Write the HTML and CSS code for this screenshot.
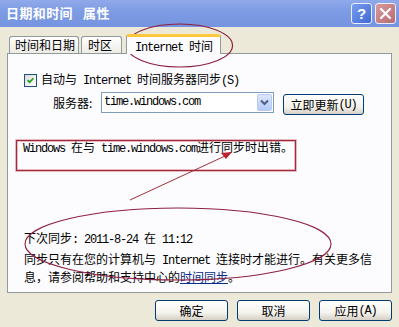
FILE: index.html
```html
<!DOCTYPE html>
<html lang="zh-CN">
<head>
<meta charset="utf-8">
<title>日期和时间 属性</title>
<link rel="stylesheet" href="styles.css">
</head>
<body>
<div class="window">
  <div class="titlebar">
    <div class="title"><span>日期和时间</span><span class="title-2">属性</span></div>
    <div class="tb-buttons">
      <div class="tb-btn help">?</div>
      <div class="tb-btn close">
        <svg width="13" height="13" viewBox="0 0 13 13"><path d="M2 2 L11 11 M11 2 L2 11" stroke="#fff" stroke-width="2.2" stroke-linecap="round"/></svg>
      </div>
    </div>
  </div>

  <div class="tabs">
    <div class="tab tab-1">时间和日期</div>
    <div class="tab tab-2">时区</div>
    <div class="tab tab-active"><span class="en">Internet </span>时间</div>
  </div>

  <div class="panel">
    <div class="row check-row">
      <span class="checkbox">
        <svg width="13" height="13" viewBox="0 0 13 13"><path d="M3 6 L5.5 8.5 L10 3.8" fill="none" stroke="#21a121" stroke-width="2"/></svg>
      </span>
      <span class="label">自动与<span class="en"> Internet </span>时间服务器同步<span class="en">(S)</span></span>
    </div>
    <div class="row server-row">
      <span class="server-label">服务器:</span>
      <div class="combo">
        <span class="en combo-text">time.windows.com</span>
        <span class="combo-btn">
          <svg width="9" height="7" viewBox="0 0 9 7"><path d="M1 1.5 L4.5 5 L8 1.5" fill="none" stroke="#4d6185" stroke-width="2"/></svg>
        </span>
      </div>
      <div class="btn btn-update">立即更新<span class="en">(U)</span></div>
    </div>
    <div class="message"><span class="en">Windows </span>在与<span class="en"> time.windows.com</span>进行同步时出错。</div>
    <div class="next-sync">下次同步<span class="en">: 2011-8-24 </span>在<span class="en"> 11:12</span></div>
    <div class="desc">同步只有在您的计算机与<span class="en"> Internet </span>连接时才能进行。有关更多信<br>息，请参阅帮助和支持中心的<span class="link">时间同步</span>。</div>
  </div>

  <div class="footer">
    <div class="btn btn-foot">确定</div>
    <div class="btn btn-foot">取消</div>
    <div class="btn btn-foot">应用<span class="en">(A)</span></div>
  </div>
</div>

<svg class="annotations" width="399" height="327" viewBox="0 0 399 327">
  <ellipse cx="179.5" cy="45.5" rx="53" ry="21.5" fill="none" stroke="#8e2040" stroke-width="1.2"/>
  <rect x="16.5" y="140.5" width="279" height="30" fill="none" stroke="#e8a8b0" stroke-width="3" opacity="0.5"/>
  <rect x="16.5" y="140.5" width="279" height="30" fill="none" stroke="#9e2a3a" stroke-width="1.3"/>
  <line x1="130" y1="200" x2="225" y2="156" stroke="#a0303a" stroke-width="1"/>
  <polygon points="232,152 221,153 226,159" fill="#c0202a"/>
  <ellipse cx="178" cy="244" rx="153" ry="36" fill="none" stroke="#8e2040" stroke-width="1.1"/>
</svg>
</body>
</html>
```

FILE: styles.css
```css
html, body {
  margin: 0;
  padding: 0;
}
body {
  width: 399px;
  height: 327px;
  overflow: hidden;
  position: relative;
  background: #ece9d8;
  font-family: "Noto Sans CJK SC", "Noto Sans", sans-serif;
  font-size: 12px;
  color: #000;
}
.en {
  font-family: "Liberation Mono", "DejaVu Sans Mono", monospace;
  letter-spacing: -1.2px;
  white-space: pre;
}
.window {
  width: 399px;
  height: 327px;
  display: flex;
  flex-direction: column;
}
.titlebar {
  height: 27px;
  flex: none;
  display: flex;
  align-items: center;
  justify-content: space-between;
  padding: 0 3px 0 6px;
  background: linear-gradient(to bottom, #90a9ea 0%, #7e9ce4 40%, #7593df 100%);
  box-sizing: border-box;
}
.title {
  color: #fff;
  font-weight: bold;
  font-size: 13px;
  letter-spacing: 0.4px;
  line-height: 16px;
  margin-top: -2px;
  display: flex;
}
.title-2 {
  margin-left: 10px;
}
.tb-buttons {
  display: flex;
  gap: 3px;
  margin-top: -1px;
}
.tb-btn {
  width: 19px;
  height: 19px;
  border: 1px solid #e8eefc;
  border-radius: 3px;
  display: flex;
  align-items: center;
  justify-content: center;
  color: #fff;
  font-family: "Liberation Sans", sans-serif;
  font-weight: bold;
  font-size: 15px;
}
.help {
  background: linear-gradient(135deg, #7c9df0, #3f69d6);
}
.close {
  background: linear-gradient(135deg, #d79a9a, #b86a72);
}
.tabs {
  display: flex;
  align-items: flex-end;
  height: 19px;
  margin-top: 7px;
  padding-left: 9px;
  flex: none;
  position: relative;
  z-index: 2;
}
.tab {
  height: 16px;
  line-height: 16px;
  box-sizing: border-box;
  border: 1px solid #919b9c;
  border-bottom: none;
  border-radius: 3px 3px 0 0;
  background: linear-gradient(to bottom, #ffffff, #ecebe6);
  text-align: left;
  white-space: nowrap;
  height: 17px;
}
.tab-1 {
  width: 70px;
  padding-left: 5px;
}
.tab-2 {
  width: 41px;
  margin-left: 2px;
  padding-left: 6px;
}
.tab-active {
  width: 95px;
  margin-left: 4px;
  height: 20px;
  padding-left: 8px;
  line-height: 18px;
  background: #fcfcfe;
  border-top: 3px solid #ffc83c;
  border-radius: 3px 3px 0 0;
  margin-bottom: -1px;
}
.panel {
  margin: 0 7px;
  height: 240px;
  box-sizing: border-box;
  border: 1px solid #919b9c;
  background: #fcfcfe;
  padding: 0 0 0 15px;
  flex: none;
}
.row {
  display: flex;
}
.check-row {
  margin-top: 18px;
  height: 16px;
  align-items: center;
  padding-left: 1px;
}
.checkbox {
  width: 13px;
  height: 13px;
  box-sizing: border-box;
  border: 1px solid #1c5180;
  background: linear-gradient(135deg, #dcdbd5, #fff);
  display: flex;
  align-items: center;
  justify-content: center;
}
.checkbox svg {
  display: block;
}
.label {
  margin-left: 4px;
  line-height: 16px;
}
.server-row {
  margin-top: 4px;
  height: 24px;
  align-items: flex-start;
  padding-left: 30px;
}
.server-label {
  line-height: 21px;
  width: 48px;
}
.combo {
  width: 173px;
  height: 21px;
  box-sizing: border-box;
  border: 1px solid #7f9db9;
  background: #fff;
  display: flex;
  align-items: center;
  justify-content: space-between;
  padding: 0 1px 0 2px;
}
.combo-text {
  line-height: 17px;
}
.combo-btn {
  width: 15px;
  height: 17px;
  box-sizing: border-box;
  border: 1px solid #b9cbf3;
  border-radius: 2px;
  background: linear-gradient(to bottom, #dce6fd, #b6caf8);
  display: flex;
  align-items: center;
  justify-content: center;
}
.btn {
  box-sizing: border-box;
  border: 1px solid #003c74;
  border-radius: 3px;
  background: linear-gradient(to bottom, #ffffff 0%, #f4f3ee 60%, #d6d0c5 100%);
  display: flex;
  align-items: center;
  justify-content: center;
  white-space: nowrap;
}
.btn-update {
  margin-left: 9px;
  margin-top: 2px;
  width: 81px;
  height: 21px;
}
.message {
  margin-top: 24px;
  line-height: 14px;
  padding-left: 0;
}
.next-sync {
  margin-top: 75px;
  line-height: 14px;
  padding-left: 1px;
}
.desc {
  margin-top: 4px;
  line-height: 15px;
  padding-left: 1px;
  white-space: nowrap;
}
.link {
  color: #0b2c8c;
  text-decoration: underline;
}
.footer {
  display: flex;
  justify-content: flex-end;
  gap: 9px;
  padding-right: 7px;
  margin-top: 7px;
}
.btn-foot {
  width: 73px;
  height: 21px;
}
.annotations {
  position: absolute;
  left: 0;
  top: 0;
  pointer-events: none;
}
```
